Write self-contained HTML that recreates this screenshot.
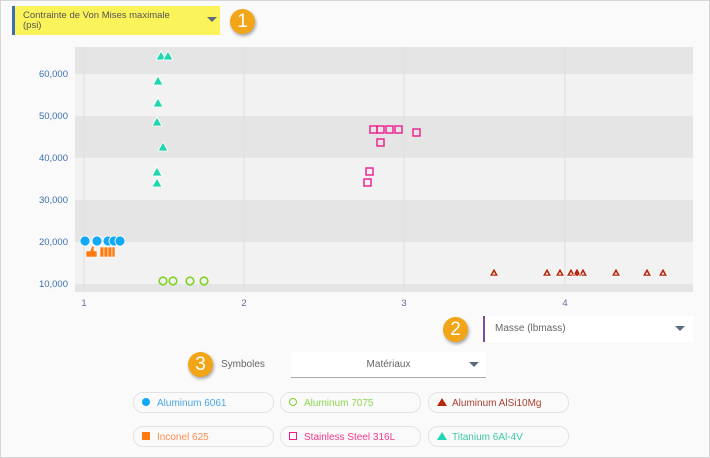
<!DOCTYPE html>
<html><head><meta charset="utf-8"><style>
body{margin:0;width:710px;height:458px;overflow:hidden;background:#fff;font-family:"Liberation Sans",sans-serif}
.frame{position:absolute;left:0;top:0;width:708px;height:456px;border:1px solid #d6d6d6;background:#fafafa}
.dd1{position:absolute;left:12px;top:6px;width:208px;height:29px;background:#fbf35a;border-left:3px solid #3b6fb0;box-sizing:border-box;font-size:9.5px;color:#555;padding:5px 0 0 8px;line-height:10px}
.badge{position:absolute;width:25px;height:25px;border-radius:50%;background:#f2a516;color:#fff;font-size:19px;text-align:center;line-height:25px;box-shadow:1px 2px 3px rgba(0,0,0,.35)}
.tri{position:absolute;width:0;height:0;border-left:5px solid transparent;border-right:5px solid transparent;border-top:5px solid #5d6b80}
.dd2{position:absolute;left:483px;top:316px;width:210px;height:26px;background:#fff;border-left:2px solid #7a4fa0;font-size:10px;color:#666;box-sizing:border-box;padding:7px 0 0 10px}
.dd3{position:absolute;left:291px;top:352px;width:195px;height:26px;background:#fff;border-bottom:1px solid #aaa;font-size:10px;color:#666;text-align:center;box-sizing:border-box;padding-top:7px}
.chip{position:absolute;width:141px;height:21px;border:1px solid #e3e3e3;border-radius:10px;background:#fafafa;font-size:10px;box-sizing:border-box;padding:5px 0 0 23px}
.chip i{position:absolute;left:8px;top:5px}
</style></head><body><div class="frame"></div>
<div class="dd1">Contrainte de Von Mises maximale<br>(psi)<div class="tri" style="left:192px;top:11px"></div></div>
<div class="badge" style="left:230px;top:9px">1</div>
<svg style="position:absolute;left:0;top:0" width="710" height="310">
<g font-size="9.5" fill="#3b6fb0" text-anchor="end">
<rect x="75" y="47" width="618" height="27" fill="#e5e5e5"/>
<rect x="75" y="74" width="618" height="42" fill="#f2f2f2"/>
<rect x="75" y="116" width="618" height="42" fill="#e5e5e5"/>
<rect x="75" y="158" width="618" height="42" fill="#f2f2f2"/>
<rect x="75" y="200" width="618" height="42" fill="#e5e5e5"/>
<rect x="75" y="242" width="618" height="42" fill="#f2f2f2"/>
<rect x="75" y="284" width="618" height="8" fill="#e5e5e5"/>
<g stroke="#dedede"><line x1="84" y1="47" x2="84" y2="292"/><line x1="244" y1="47" x2="244" y2="292"/><line x1="404" y1="47" x2="404" y2="292"/><line x1="565" y1="47" x2="565" y2="292"/></g>
<text x="68" y="77">60,000</text><text x="68" y="119">50,000</text><text x="68" y="161">40,000</text><text x="68" y="203">30,000</text><text x="68" y="245">20,000</text><text x="68" y="287">10,000</text>
</g>
<g font-size="9.5" fill="#7a5fa0" text-anchor="middle"><text x="84" y="306">1</text><text x="244" y="306">2</text><text x="404" y="306">3</text><text x="565" y="306">4</text></g>
<g fill="#1ed6b0" stroke="#fff" stroke-width="0.8">
<path d="M161 51l5 9h-10z"/><path d="M168 51l5 9h-10z"/><path d="M158 76l5 9h-10z"/><path d="M158 98l5 9h-10z"/><path d="M157 117l5 9h-10z"/><path d="M163 142l5 9h-10z"/><path d="M157 167l5 9h-10z"/><path d="M157 178l5 9h-10z"/></g>
<g fill="#11a8f5" stroke="#fff" stroke-width="0.8"><circle cx="85" cy="241" r="5"/><circle cx="97" cy="241" r="5"/><circle cx="108" cy="241" r="5"/><circle cx="114" cy="241" r="5"/><circle cx="120" cy="241" r="5"/></g>
<g fill="#ff7a10" stroke="#fff" stroke-width="0.6"><path d="M86 251h4l2-5h2v5h3v6h-11z"/><rect x="100" y="247" width="4" height="10"/><rect x="104" y="247" width="4" height="10"/><rect x="108" y="247" width="4" height="10"/><rect x="112" y="247" width="3" height="10"/></g>
<g fill="none" stroke="#7ed321" stroke-width="1.6"><circle cx="163" cy="281" r="3.8"/><circle cx="173" cy="281" r="3.8"/><circle cx="190" cy="281" r="3.8"/><circle cx="204" cy="281" r="3.8"/></g>
<g fill="none" stroke="#f0198c" stroke-width="1.4"><rect x="370" y="126" width="7" height="7"/><rect x="377" y="126" width="7" height="7"/><rect x="386" y="126" width="7" height="7"/><rect x="395" y="126" width="7" height="7"/><rect x="413" y="129" width="7" height="7"/><rect x="377" y="139" width="7" height="7"/><rect x="366" y="168" width="7" height="7"/><rect x="364" y="179" width="7" height="7"/></g>
<g fill="#b5280e" stroke="#fff" stroke-width="0.6">
<path d="M494 268l4.5 8h-9z M547 268l4.5 8h-9z M560 268l4.5 8h-9z M571 268l4.5 8h-9z M577 268l4.5 8h-9z M583 268l4.5 8h-9z M616 268l4.5 8h-9z M647 268l4.5 8h-9z M663 268l4.5 8h-9z"/></g>
<g fill="#fff"><path d="M494 272l1.5 2.5h-3z M547 272l1.5 2.5h-3z M560 272l1.5 2.5h-3z M571 272l1.5 2.5h-3z M583 272l1.5 2.5h-3z M616 272l1.5 2.5h-3z M647 272l1.5 2.5h-3z M663 272l1.5 2.5h-3z"/></g>
</svg>
<div class="badge" style="left:443px;top:317px">2</div>
<div class="dd2">Masse (lbmass)<div class="tri" style="left:190px;top:10px"></div></div>
<div class="badge" style="left:188px;top:352px">3</div>
<div style="position:absolute;left:221px;top:359px;font-size:10px;color:#666">Symboles</div>
<div class="dd3">Matériaux<div class="tri" style="left:178px;top:10px"></div></div>
<div class="chip" style="left:133px;top:392px;color:#4aa6e8"><i style="width:8px;height:8px;border-radius:50%;background:#11a8f5;top:5px"></i>Aluminum 6061</div>
<div class="chip" style="left:280px;top:392px;color:#8fd650"><i style="width:6px;height:6px;border-radius:50%;border:1.5px solid #7ed321;top:5px"></i>Aluminum 7075</div>
<div class="chip" style="left:428px;top:392px;color:#a84030"><i style="border-left:5px solid transparent;border-right:5px solid transparent;border-bottom:8px solid #b5280e;top:5px"></i>Aluminum AlSi10Mg</div>
<div class="chip" style="left:133px;top:426px;color:#ff8c50"><i style="width:8px;height:8px;background:#ff7a10"></i>Inconel 625</div>
<div class="chip" style="left:280px;top:426px;color:#f0398c"><i style="width:6px;height:6px;border:1.5px solid #f0198c;top:5px"></i>Stainless Steel 316L</div>
<div class="chip" style="left:428px;top:426px;color:#3cc8a8"><i style="border-left:5px solid transparent;border-right:5px solid transparent;border-bottom:8px solid #1ed6b0;top:5px"></i>Titanium 6Al-4V</div>
</body></html>
